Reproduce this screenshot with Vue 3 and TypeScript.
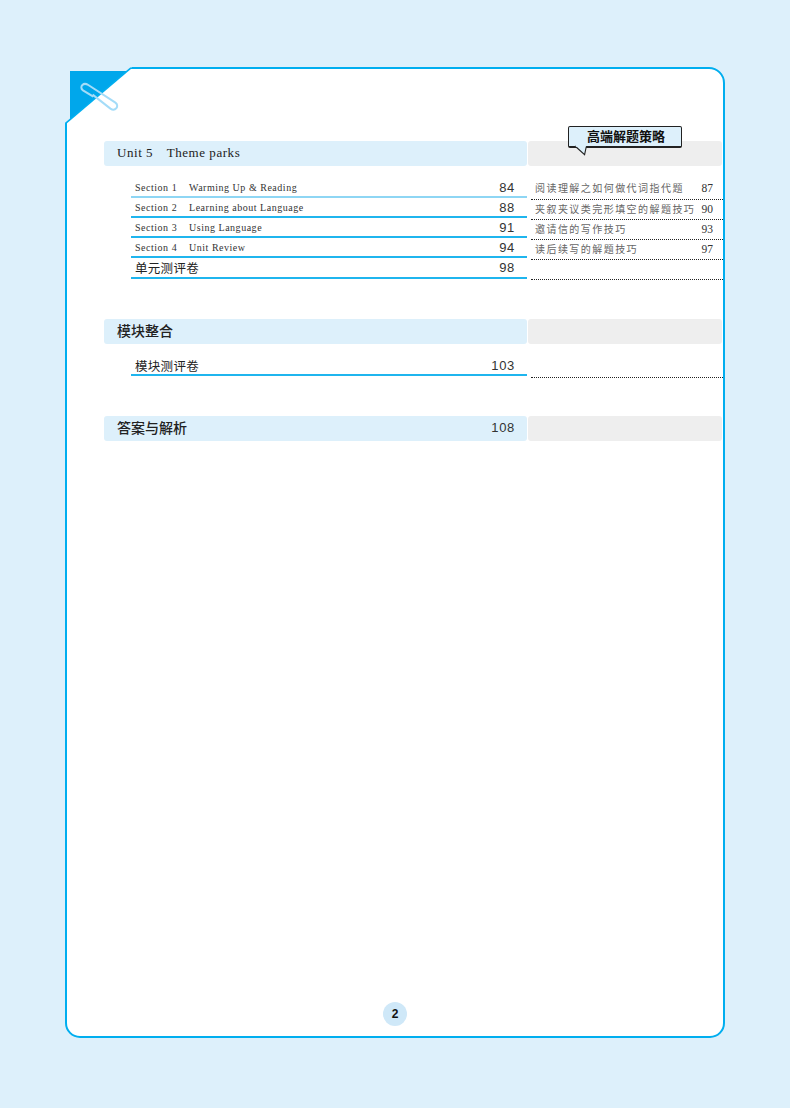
<script setup lang="ts">
interface Row {
  kind: 'section' | 'test'
  tag?: string
  label: string
  page: string
  tip?: string
  tipPage?: string
  light?: boolean
  tall?: boolean
}
interface Block {
  title: string
  latin: boolean
  page?: string
  rows: Row[]
}

const blocks: Block[] = [
  {
    title: 'Unit 5\u2003Theme parks',
    latin: true,
    rows: [
      { kind: 'section', tag: 'Section 1', label: 'Warming Up & Reading', page: '84', tip: '阅读理解之如何做代词指代题', tipPage: '87', light: true },
      { kind: 'section', tag: 'Section 2', label: 'Learning about Language', page: '88', tip: '夹叙夹议类完形填空的解题技巧', tipPage: '90' },
      { kind: 'section', tag: 'Section 3', label: 'Using Language', page: '91', tip: '邀请信的写作技巧', tipPage: '93' },
      { kind: 'section', tag: 'Section 4', label: 'Unit Review', page: '94', tip: '读后续写的解题技巧', tipPage: '97' },
      { kind: 'test', label: '单元测评卷', page: '98', tall: true },
    ],
  },
  {
    title: '模块整合',
    latin: false,
    rows: [{ kind: 'test', label: '模块测评卷', page: '103' }],
  },
  { title: '答案与解析', latin: false, page: '108', rows: [] },
]
</script>

<template>
  <main class="page">
    <div class="card">
      <svg class="corner" viewBox="65 67 70 60" width="70" height="60" aria-hidden="true">
        <polygon points="63,65 132,65 132,67 63,125" fill="#ddf0fb" />
        <polygon points="70,71 127.2,71 70,119.6" fill="#00a7eb" />
        <line x1="131" y1="67.8" x2="65.6" y2="123.4" stroke="#00aeef" stroke-width="1.6" />
        <path
          d="M93.3 96.7 L83 90.4 C80.8 88.8 81 86.4 82.4 85 C83.8 83.6 86.4 83.8 88.3 85 L115.4 102.6 C117.6 104.2 117.6 106.8 116.4 108.2 C115 109.8 112.4 110 110.4 108.6 L92.6 94.6"
          fill="none"
          stroke="#a4dcf8"
          stroke-width="2"
        />
      </svg>

      <div class="bubble">
        <span>高端解题策略</span>
        <svg class="tail" viewBox="0 0 16 10" width="16" height="10" aria-hidden="true">
          <path d="M1 0 L10.6 8.6 L12.4 0" fill="#ddf0fb" stroke="#222" stroke-width="1.1" />
          <line x1="1.8" y1="0" x2="11.6" y2="0" stroke="#ddf0fb" stroke-width="1.6" />
        </svg>
      </div>

      <section v-for="block in blocks" :key="block.title" class="block">
        <div class="bar">
          <div class="bar-main" :class="{ latin: block.latin }">
            <span>{{ block.title }}</span>
            <span v-if="block.page" class="num">{{ block.page }}</span>
          </div>
          <div class="bar-side"></div>
        </div>
        <div v-if="block.rows.length" class="rows">
          <div v-for="row in block.rows" :key="row.label" class="row">
            <div class="cell" :class="{ light: row.light, tall: row.tall }">
              <span v-if="row.kind === 'section'" class="entry">
                <span class="tag">{{ row.tag }}</span>{{ row.label }}
              </span>
              <span v-else class="test">{{ row.label }}</span>
              <span class="num">{{ row.page }}</span>
            </div>
            <div class="tip" :class="{ first: row.light }">
              <span class="tip-text">{{ row.tip }}</span>
              <span class="tip-page">{{ row.tipPage }}</span>
            </div>
          </div>
        </div>
      </section>

      <div class="folio">2</div>
    </div>
  </main>
</template>

<style scoped>
.page {
  box-sizing: border-box;
  width: 790px;
  height: 1108px;
  padding: 67px 65px 0;
  background: #ddf0fb;
}

.card {
  position: relative;
  box-sizing: border-box;
  display: flex;
  flex-direction: column;
  width: 660px;
  height: 971px;
  padding: 72px 0 10px 37px;
  border: 2px solid #00aeef;
  border-radius: 0 16px 15px 15px;
  background: #fff;
}

.corner {
  position: absolute;
  left: -2px;
  top: -2px;
  overflow: visible;
}

.bubble {
  position: absolute;
  left: 501px;
  top: 57px;
  box-sizing: border-box;
  width: 114px;
  height: 22px;
  padding-left: 18px;
  border: 1px solid #222;
  border-bottom-width: 2px;
  border-radius: 2px;
  background: #ddf0fb;
  color: #111;
  font: 700 13px/17px "Noto Sans CJK SC", sans-serif;
}

.tail {
  position: absolute;
  left: 5px;
  top: 19px;
  overflow: visible;
}

.block + .block {
  margin-top: 40px;
}

.bar {
  display: grid;
  grid-template-columns: 423px 194px;
  gap: 1px;
  height: 25px;
}

.bar-main {
  display: flex;
  align-items: center;
  justify-content: space-between;
  padding: 0 12px 2px 13px;
  border-radius: 3px;
  background: #ddf0fb;
  color: #222;
  font: 500 14px/23px "Noto Sans CJK SC", sans-serif;
}

.bar-main.latin {
  font: 400 13px/23px "Liberation Serif", serif;
  letter-spacing: 0.55px;
}

.bar-side {
  border-radius: 3px;
  background: #eeeeee;
}

.rows {
  margin-top: 12px;
}

.row {
  display: grid;
  grid-template-columns: 423px 192px;
  column-gap: 4px;
}

.cell {
  box-sizing: border-box;
  display: flex;
  align-items: center;
  justify-content: space-between;
  height: 20px;
  margin-left: 27px;
  padding: 2px 12px 0 4px;
  border-bottom: 2px solid #1fb5ee;
  color: #333;
}

.cell.light {
  border-bottom-color: #8ed6f4;
}

.cell.tall {
  height: 21px;
  padding-top: 1px;
}

.entry {
  font: 400 10px/18px "Liberation Serif", serif;
  letter-spacing: 0.52px;
}

.tag {
  display: inline-block;
  width: 54px;
}

.test {
  color: #222;
  font: 400 12.5px/18px "Noto Sans CJK SC", sans-serif;
  letter-spacing: 0.3px;
}

.num {
  color: #333;
  font: 400 13px/18px "Liberation Sans", sans-serif;
  letter-spacing: 0.7px;
}

.tip {
  box-sizing: border-box;
  display: flex;
  align-items: center;
  justify-content: space-between;
  height: 22px;
  margin-bottom: -2px;
  padding: 1px 10px 0 4px;
  border-bottom: 1px dotted #222;
}

.tip.first {
  padding-top: 0;
  padding-bottom: 1px;
}

.tip-text {
  color: #666;
  font: 400 10px/18px "Noto Sans CJK SC", sans-serif;
  letter-spacing: 1.45px;
}

.tip-page {
  color: #333;
  font: 400 11.5px/18px "Liberation Serif", serif;
}

.folio {
  align-self: center;
  width: 24px;
  height: 24px;
  margin: auto 0 0 -37px;
  border-radius: 50%;
  background: #cfe8f8;
  color: #111;
  font: 700 12px/24px "Liberation Sans", sans-serif;
  text-align: center;
}
</style>

<style>
html,
body {
  background: #ddf0fb;
}
</style>
